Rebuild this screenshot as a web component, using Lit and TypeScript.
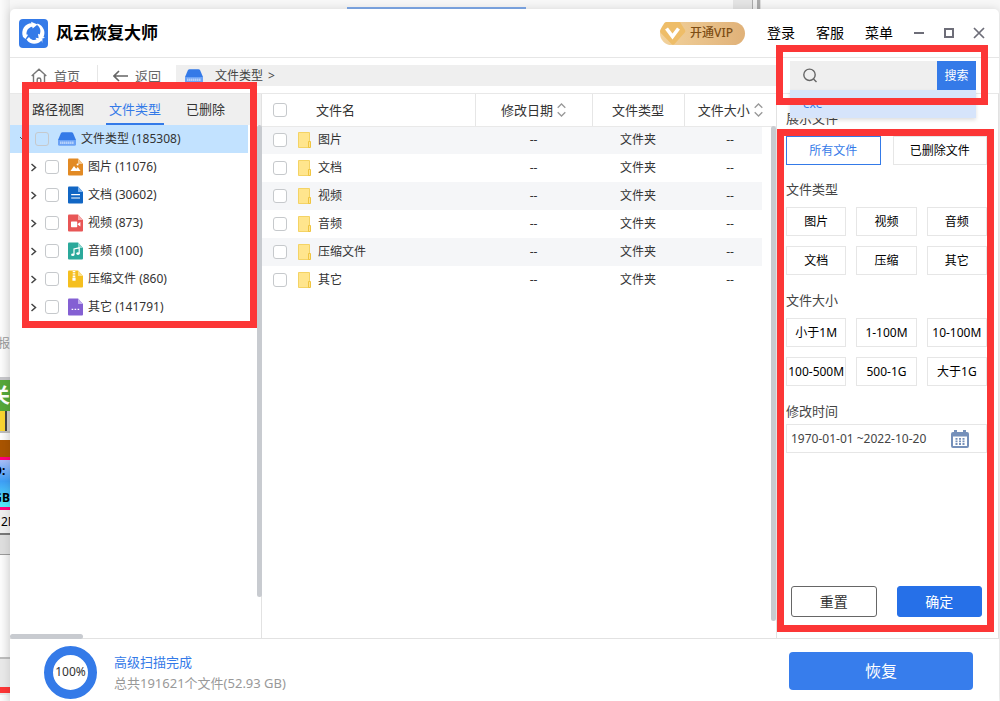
import { LitElement, html, svg, css } from "lit";
import { customElement, state } from "lit/decorators.js";
import { classMap } from "lit/directives/class-map.js";

const KINDS = [
  { name: "图片", count: 11076, color: "#e28a24", tip: "#f3c489" },
  { name: "文档", count: 30602, color: "#1166c4", tip: "#7fb4ee" },
  { name: "视频", count: 873, color: "#e85656", tip: "#f6adad" },
  { name: "音频", count: 100, color: "#2ba99b", tip: "#8fd8cf" },
  { name: "压缩文件", count: 860, color: "#f5bf1f", tip: "#fbe08c" },
  { name: "其它", count: 141791, color: "#8460d3", tip: "#c3b0ee" },
];

const GLYPHS = [
  svg`<path fill="#fff" d="M2.5 13 6 8l2.2 2.8L9.8 9l2.7 4z"/><circle cx="9.6" cy="6.6" r="1" fill="#fff"/>`,
  svg`<path stroke="#fff" stroke-width="1.2" d="M3.2 8.6h8.8M3.2 12h8.8"/>`,
  svg`<rect x="3" y="7.4" width="6.2" height="5.8" rx=".6" fill="#fff"/><path fill="#fff" d="m9.6 10 2.8-2v4.6l-2.8-2z"/>`,
  svg`<path fill="none" stroke="#fff" stroke-width="1.2" d="M6 12.6V7l5.2-1.2v5.6"/><ellipse cx="4.8" cy="12.8" rx="1.7" ry="1.3" fill="#fff"/><ellipse cx="10" cy="11.6" rx="1.7" ry="1.3" fill="#fff"/>`,
  svg`<path stroke="#fff" stroke-width="2.6" stroke-dasharray="1 .7" d="M6 1v6.4"/><rect x="4.4" y="7.4" width="3.2" height="3.4" rx=".5" fill="#fff"/>`,
  svg`<path stroke="#fff" stroke-width="1.4" stroke-dasharray="1.6 1.4" d="M3.6 11.4h8"/>`,
];

const driveIcon = html`<svg class="drive" width="18" height="14" viewBox="0 0 18 14" aria-hidden="true">
  <path fill="#347ae8" d="M4.5.2h9q1 0 1.500.9L18 8H0l3-6.900Q3.500.2 4.500.2z" />
  <path fill="#6ba2f5" d="M0 8h18v4.200q0 1.600-1.600 1.600H1.600Q0 13.800 0 12.200z" />
  <path stroke="#fff" stroke-width="2.600" stroke-dasharray=".8 1.200" d="M2.500 10.800h13" />
</svg>`;

const sortIcon = html`<svg class="sort" width="9" height="14" viewBox="0 0 9 14" aria-hidden="true">
  <path d="M.7 4.700 4.500 1l3.800 3.700M.7 9.300 4.500 13l3.800-3.700" />
</svg>`;

@customElement("app-root")
export class AppRoot extends LitElement {
  @state() private tab = "文件类型";
  @state() private scope = "所有文件";

  static styles = css`
    :host {
      display: block;
      position: relative;
      box-sizing: border-box;
      min-height: 100vh;
      padding: 9px 1px 0 10px;
      overflow: hidden;
      background: #f7f7f7;
      color: #333;
      font: 12px/20px "Noto Sans", "Noto Sans CJK SC", sans-serif;
    }
    * { box-sizing: border-box; }
    button, input { font: inherit; color: inherit; margin: 0; padding: 0; border: 0; background: none; }
    button { cursor: pointer; white-space: nowrap; }
    svg { display: block; flex: none; fill: none; }
    a { color: inherit; text-decoration: none; }
    .check {
      appearance: none; display: block; flex: none;
      width: 14px; height: 14px; border: 1px solid #c6c9cc; border-radius: 3px; background: #fff;
    }
    .check:checked { background: #347ae8; }

    /* neighbouring windows on the desktop behind */
    .desk { position: absolute; inset: 0 auto 0 0; width: 10px; overflow: hidden; background: linear-gradient(90deg, #fcfcfc, #ededed); color: #000; white-space: nowrap; }
    .desk div { display: flex; align-items: center; justify-content: flex-end; }
    .d-gap { height: 330px; }
    .d-news { height: 28px; color: #999; }
    .d-edge { height: 22px; border-bottom: 3px solid #c4c4c8; }
    .d-green { height: 31px; background: #55a63a; color: #fff; font-size: 20px; font-weight: 700; }
    .d-yellow { height: 22px; background: linear-gradient(90deg, #f8d331 5px, #444 5px 7px, #ccc 7px); border-bottom: 2px solid #bbb; }
    .d-brown { height: 17px; margin-top: 7px; background: #a85400; }
    .d-blue { height: 53px; border: solid #ff007c; border-width: 3px 0; background: linear-gradient(#a9bdf7, #3e9ef5 45%, #55ecfa); }
    .d-lines { font-weight: 700; line-height: 27px; }
    .desk .d-size { justify-content: flex-start; height: 25px; padding-left: 1px; border-bottom: 2px solid #777; background: #eee; }
    .d-base { height: 20px; background: #ddd; border-bottom: 1px solid #999; }
    .d-low { height: 104px; border-bottom: 2px solid #bbb; }
    .d-red { height: 36px; background: linear-gradient(#e8e8e8 28px, #fc3636 28px 34px, #e8e8e8 34px); }
    .top-line { position: absolute; top: 7px; left: 347px; width: 179px; height: 2px; background: #7fa9e8; }
    .top-edge { position: absolute; top: 0; left: 733px; width: 28px; height: 9px; background: linear-gradient(90deg, #e4e4e4 19px, #aaa 19px 20px, #eee 20px 24px, #aaa 24px 27px, #ddd 27px); }

    .window {
      position: relative; display: flex; flex-direction: column;
      min-height: calc(100vh - 9px);
      background: #fff; border-radius: 5px 5px 0 0; box-shadow: 0 0 8px #0002;
    }
    .title { display: flex; align-items: center; height: 49px; padding: 0 14px 0 9px; border-bottom: 1px solid #e6e6e6; }
    .title h1 { margin: 0 auto 0 8px; color: #000; font-size: 17px; font-weight: 700; line-height: 24px; }
    .vip { display: flex; align-items: center; height: 23px; padding-right: 12px; gap: 4px; border-radius: 12px; background: linear-gradient(90deg, #f2d29c, #e0b178); color: #7d4d14; font-weight: 500; }
    .menu { display: flex; gap: 21px; margin-left: 22px; color: #000; font-size: 14px; }
    .sys { display: flex; gap: 18px; margin-left: 20px; }
    .sys button { width: 12px; height: 12px; }
    .sys svg { stroke: #6d6d78; stroke-width: 2; }

    .tools { display: flex; height: 36px; padding: 7px 0 7px 21px; border-bottom: 1px solid #e8e8e8; color: #666; font-size: 13px; }
    .nav { display: flex; align-items: center; gap: 7px; line-height: 22px; }
    .nav + .nav { margin-left: 17px; padding-left: 15px; border-left: 1px solid #e6e6e6; }
    .crumb { display: flex; align-items: center; flex: 1; margin-left: 15px; padding-left: 9px; background: #efefef; color: #444; font-size: 12px; }
    .crumb span { margin-left: 12px; }
    .crumb .arrow { margin-left: 5px; }
    .crumb-end { width: 222px; }

    .search { position: absolute; z-index: 2; top: 52px; right: 23px; width: 186px; }
    .search-box { display: flex; height: 29px; background: #efefef; }
    .search-box label { display: flex; align-items: center; flex: 1; min-width: 0; padding-left: 13px; gap: 8px; }
    .search-box input { min-width: 0; width: 100%; height: 100%; outline: 0; }
    .search-box button { width: 39px; background: #347ae8; color: #fff; }
    .hint { display: block; width: 100%; height: 28px; padding-left: 13px; background: #d6e4fb; color: #347ae8; text-align: left; line-height: 28px; box-shadow: 0 2px 4px #0002; }

    .body { display: grid; grid-template-columns: 252px minmax(0, 1fr) 223px; flex: 1; border-bottom: 1px solid #e2e2e2; }
    .side { position: relative; border-right: 1px solid #e2e2e2; }
    .tabs { display: flex; height: 31px; padding-left: 22px; gap: 22px; background: #efefef; font-size: 13px; }
    .tab { border-bottom: 2px solid transparent; }
    .tab.mid { padding: 0 3px; }
    .tab.on { border-color: #347ae8; color: #347ae8; }
    .tree { margin: 0 13px 0 0; padding: 0; list-style: none; }
    .tree li { display: flex; align-items: center; height: 28px; padding-left: 20px; }
    .tree li.root { padding-left: 9px; background: #c2e2ff; }
    .tree label { display: flex; align-items: center; }
    .tree .check { margin: 0 9px 0 8px; }
    .tree .root .check { background: transparent; }
    .tree label span { margin-left: 5px; }
    .vbar, .hbar { position: absolute; border-radius: 3px; background: #c8cbd0; }
    .side .vbar { top: 31px; right: -1px; bottom: 41px; width: 5px; }
    .hbar { left: 0; bottom: -1px; width: 73px; height: 5px; }

    .files { position: relative; }
    .files .vbar { top: 32px; right: 0; bottom: 17px; width: 5px; }
    table { width: 100%; border-collapse: collapse; table-layout: fixed; }
    th, td { height: 28px; padding: 0; text-align: center; font-weight: 400; }
    thead th { height: 32px; border-bottom: 1px solid #e9e9e9; font-size: 13px; }
    thead th + th { border-left: 1px solid #e6e6e6; }
    .c-date { width: 117px; }
    .c-type, .c-size { width: 92px; }
    tbody tr:nth-child(odd) { background: linear-gradient(#f5f6f8, #f5f6f8) no-repeat 0 0 / calc(100% - 14px) 100%; }
    .name { display: flex; align-items: center; padding-left: 11px; }
    .name svg { margin: 0 7px 0 11px; }
    thead .name { gap: 29px; }
    .head { display: flex; align-items: center; justify-content: center; gap: 4px; }
    .sort { stroke: #999; stroke-width: 1.3; }

    .filter { display: flex; flex-direction: column; padding: 14px 11px 21px 9px; border-left: 1px solid #e2e2e2; border-right: 1px solid #e2e2e2; color: #000; }
    .filter h2 { margin: 0 0 8px; color: #444; font-size: 13px; font-weight: 400; line-height: 20px; }
    .filter h2.tight { margin-bottom: 3px; }
    .opts { display: grid; grid-template-columns: repeat(3, minmax(0, 1fr)); gap: 10px; margin-bottom: 15px; }
    .opts.two { grid-template-columns: repeat(2, minmax(0, 1fr)); gap: 12px; margin-bottom: 14px; }
    .opts button { display: flex; align-items: center; justify-content: center; height: 29px; border: 1px solid #e6e6e6; background: #fff; }
    .opts button.on { border-color: #347ae8; color: #347ae8; }
    .date { display: flex; align-items: center; height: 29px; padding: 0 17px 0 4px; border: 1px solid #e6e6e6; color: #444; }
    .date input { flex: 1; min-width: 0; outline: 0; }
    .acts { display: flex; gap: 20px; margin: auto 5px 0; }
    .acts button { flex: 1; height: 31px; border: 1px solid #666; border-radius: 3px; color: #333; font-size: 14px; }
    .acts .ok { border-color: #2670e8; background: #2670e8; color: #fff; }

    .foot { display: flex; align-items: center; height: 62px; padding: 4px 26px 0 34px; font-size: 13px; }
    .ring { display: grid; place-items: center; width: 53px; height: 53px; border: 9px solid #347ae8; border-radius: 50%; font-size: 12px; line-height: 20px; }
    .foot p { margin: 0; line-height: 21px; color: #999; }
    .foot .done { color: #347ae8; }
    .info { margin: 2px auto 0 17px; }
    .recover { width: 184px; height: 38px; margin-bottom: 2px; border-radius: 4px; background: #377dec; color: #fff; font-size: 16px; }

    /* annotation frames laid over the window */
    .mark { position: absolute; z-index: 3; border: 7px solid #fc3636; pointer-events: none; }
    .m-tree { left: 12px; top: 73px; width: 235px; height: 246px; }
    .m-search { right: 11px; top: 36px; width: 212px; height: 60px; }
    .m-filter { right: 5px; top: 120px; bottom: 69px; width: 217px; }
  `;

  private desk() {
    return html`<div class="desk" aria-hidden="true">
        <div class="d-gap"></div><div class="d-news">报</div><div class="d-edge"></div>
        <div class="d-green">关</div><div class="d-yellow"></div><div class="d-brown"></div>
        <div class="d-blue"><span class="d-lines">D:<br />GB</span></div>
        <div class="d-size">2M</div><div class="d-base"></div><div class="d-low"></div><div class="d-red"></div>
      </div>
      <div class="top-line"></div><div class="top-edge"></div>`;
  }

  private title() {
    return html`<header class="title">
      <svg width="29" height="29" viewBox="0 0 29 29" aria-hidden="true">
        <rect width="29" height="29" rx="4" fill="#347ae8" />
        <g fill="#fff">
          <path d="M4 18C1.500 11 6 4.500 12.500 4.300L12 2.800l6.500 2.700-4.800 4-.5-1.700C9.500 8.500 7.300 11.500 7.500 15.500l1.600.3L6.500 20l-4-3.200z" />
          <path d="M18.500 4.500c6 2.200 8.500 8.500 6 13.500l1.500.8-6.200 2-.8-6 1.700.8c1.600-4 .4-7.500-2.700-9.600z" />
          <path d="M22.500 21.500c-4 4.500-11.500 4.500-15-1L10 18c2 3 5 3.700 7.500 2.600l-1-1.900 7 1-.3 4.300z" />
        </g>
      </svg>
      <h1>风云恢复大师</h1>
      <button class="vip">
        <svg width="26" height="23" viewBox="0 0 26 23" aria-hidden="true">
          <path fill="#eebd68" d="M6 0h14l5 8q.8 1.500-.4 2.800L14.500 22q-1.500 1.300-3 0L.6 10.800Q-.3 9.500.4 8L4 1.500Q4.800 0 6 0z" />
          <path stroke="#fff" stroke-width="3.600" d="M6.500 6.500 12.500 14.500 18.500 6.500" />
        </svg>开通VIP
      </button>
      <nav class="menu"><a href="#login">登录</a><a href="#service">客服</a><a href="#menu">菜单</a></nav>
      <div class="sys">
        <button aria-label="最小化"><svg width="12" height="12"><path d="M1 6h10" /></svg></button>
        <button aria-label="最大化"><svg width="12" height="12"><path d="M2 2h8v8H2z" /></svg></button>
        <button aria-label="关闭"><svg width="12" height="12"><path stroke-width="1.700" d="m1 1 10 10M11 1 1 11" /></svg></button>
      </div>
    </header>`;
  }

  private tools() {
    return html`<div class="tools">
        <button class="nav">
          <svg width="16" height="16" viewBox="0 0 16 16" stroke="#777" stroke-width="1.400" aria-hidden="true"><path d="M.7 8 8 1.200 15.300 8M2.500 7v8h3.700v-3.200a1.800 1.800 0 0 1 3.600 0V15h3.700V7" /></svg>首页
        </button>
        <button class="nav">
          <svg width="15" height="12" viewBox="0 0 15 12" stroke="#666" stroke-width="1.600" aria-hidden="true"><path d="M15 6H1M6 1 1 6l5 5" /></svg>返回
        </button>
        <div class="crumb">${driveIcon}<span>文件类型</span><span class="arrow">&gt;</span></div>
        <div class="crumb-end"></div>
      </div>
      <form class="search" @submit=${(e: Event) => e.preventDefault()}>
        <div class="search-box">
          <label><svg width="15" height="15" viewBox="0 0 15 15" stroke="#666" stroke-width="1.400" aria-hidden="true"><circle cx="6.500" cy="6.800" r="5.700" /><path d="m10.500 11 3 3" /></svg><input type="text" aria-label="搜索" /></label>
          <button>搜索</button>
        </div>
        <button type="button" class="hint">exe</button>
      </form>`;
  }

  private side() {
    return html`<aside class="side">
      <div class="tabs">
        ${["路径视图", "文件类型", "已删除"].map((t, i) => html`<button class=${classMap({ tab: true, mid: i === 1, on: t === this.tab })} @click=${() => (this.tab = t)}>${t}</button>`)}
      </div>
      <ul class="tree">
        <li class="root">
          <svg width="8" height="8" viewBox="0 0 8 8" stroke="#444" aria-hidden="true"><path d="m1 2 3 3 3-3" /></svg>
          <label><input class="check" type="checkbox" />${driveIcon}<span>文件类型 (185308)</span></label>
        </li>
        ${KINDS.map((k, i) => html`<li>
          <svg width="7" height="9" viewBox="0 0 7 9" stroke="#444" stroke-width="1.500" aria-hidden="true"><path d="m1.500 1 4 3.500-4 3.500" /></svg>
          <label><input class="check" type="checkbox" />
            <svg width="15" height="18" viewBox="0 0 15 18" aria-hidden="true">
              <path fill=${k.color} d="M1.500.5H10L15 6v10.500q0 1-1 1H1q-1 0-1-1V1.500q0-1 1-1z" />
              <path fill=${k.tip} d="M10 .5 15 6h-4.500q-.5 0-.5-.5z" />${GLYPHS[i]}
            </svg><span>${k.name} (${k.count})</span></label>
        </li>`)}
      </ul>
      <div class="vbar"></div><div class="hbar"></div>
    </aside>`;
  }

  private files() {
    return html`<main class="files">
      <table>
        <colgroup><col /><col class="c-date" /><col class="c-type" /><col class="c-size" /></colgroup>
        <thead><tr>
          <th><div class="name"><input class="check" type="checkbox" aria-label="全选" />文件名</div></th>
          <th><div class="head">修改日期${sortIcon}</div></th>
          <th>文件类型</th>
          <th><div class="head">文件大小${sortIcon}</div></th>
        </tr></thead>
        <tbody>
          ${KINDS.map((k) => html`<tr>
            <td><label class="name"><input class="check" type="checkbox" />
              <svg width="13" height="16" viewBox="0 0 13 16" aria-hidden="true"><path fill="#ffe58d" stroke="#f4d365" d="M.5.500h11v15H.5z" /><path fill="#ffe58d" stroke="#f0c541" d="M10.500 9.500h2v6h-2z" /></svg>${k.name}</label></td>
            <td>--</td><td>文件夹</td><td>--</td>
          </tr>`)}
        </tbody>
      </table>
      <div class="vbar"></div>
    </main>`;
  }

  private filter() {
    return html`<aside class="filter">
      <h2>展示文件</h2>
      <div class="opts two">
        ${["所有文件", "已删除文件"].map((t) => html`<button class=${classMap({ on: t === this.scope })} @click=${() => (this.scope = t)}>${t}</button>`)}
      </div>
      <h2>文件类型</h2>
      <div class="opts">${["图片", "视频", "音频", "文档", "压缩", "其它"].map((t) => html`<button>${t}</button>`)}</div>
      <h2>文件大小</h2>
      <div class="opts">${["小于1M", "1-100M", "10-100M", "100-500M", "500-1G", "大于1G"].map((t) => html`<button>${t}</button>`)}</div>
      <h2 class="tight" id="when">修改时间</h2>
      <div class="date">
        <input type="text" aria-labelledby="when" value="1970-01-01 ~2022-10-20" />
        <svg width="18" height="18" viewBox="0 0 18 18" aria-hidden="true">
          <path fill="#7590ba" d="M3 0h3v2h6V0h3v2h1q2 0 2 2v12q0 2-2 2H2q-2 0-2-2V4q0-2 2-2h1z" />
          <path fill="#fff" d="M2 6.500h14V16H2z" />
          <path stroke="#7590ba" stroke-width="1.800" stroke-dasharray="2 1.500" d="M4.500 8.800h9M4.500 11.400h9M4.500 14h9" />
        </svg>
      </div>
      <div class="acts"><button>重置</button><button class="ok">确定</button></div>
    </aside>`;
  }

  render() {
    return html`${this.desk()}
      <div class="window">
        ${this.title()}${this.tools()}
        <div class="body">${this.side()}${this.files()}${this.filter()}</div>
        <footer class="foot">
          <div class="ring">100%</div>
          <div class="info"><p class="done">高级扫描完成</p><p>总共191621个文件(52.93 GB)</p></div>
          <button class="recover">恢复</button>
        </footer>
        <div class="mark m-tree"></div><div class="mark m-search"></div><div class="mark m-filter"></div>
      </div>`;
  }
}
